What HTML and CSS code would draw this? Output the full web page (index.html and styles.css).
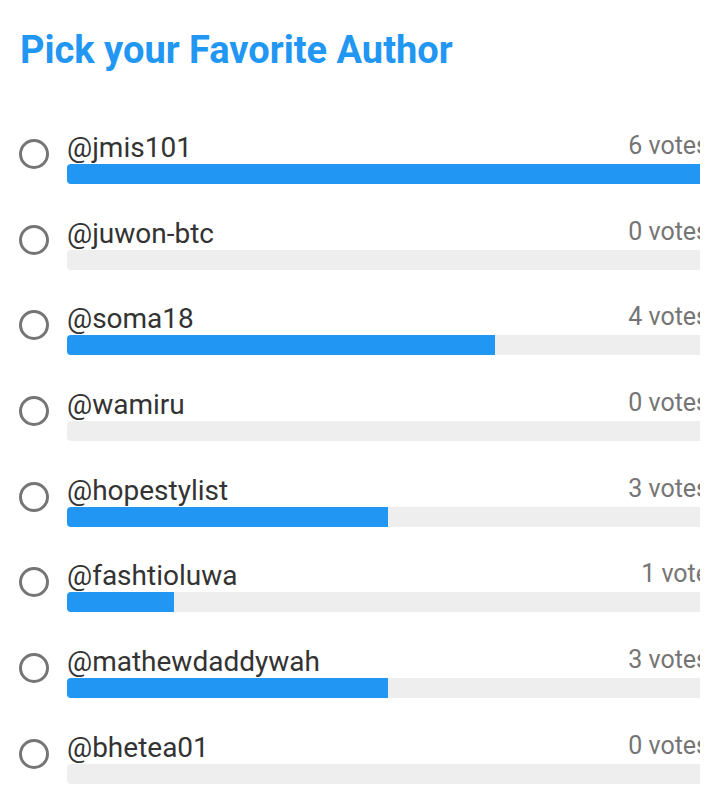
FILE: index.html
```
<!DOCTYPE html>
<html>
<head>
<meta charset="utf-8">
<link rel="stylesheet" href="styles.css">
</head>
<body>
<div class="page">
  <h1 class="title">Pick your Favorite Author</h1>
  <div class="list">
    <div class="row"><span class="radio"></span><div class="content"><div class="top"><span class="name">@jmis101</span><span class="votes">6 votes</span></div><div class="bar"><div class="fill" style="width:100%"></div></div></div></div>
    <div class="row"><span class="radio"></span><div class="content"><div class="top"><span class="name">@juwon-btc</span><span class="votes">0 votes</span></div><div class="bar"><div class="fill" style="width:0%"></div></div></div></div>
    <div class="row"><span class="radio"></span><div class="content"><div class="top"><span class="name">@soma18</span><span class="votes">4 votes</span></div><div class="bar"><div class="fill" style="width:66.667%"></div></div></div></div>
    <div class="row"><span class="radio"></span><div class="content"><div class="top"><span class="name">@wamiru</span><span class="votes">0 votes</span></div><div class="bar"><div class="fill" style="width:0%"></div></div></div></div>
    <div class="row"><span class="radio"></span><div class="content"><div class="top"><span class="name">@hopestylist</span><span class="votes">3 votes</span></div><div class="bar"><div class="fill" style="width:50%"></div></div></div></div>
    <div class="row"><span class="radio"></span><div class="content"><div class="top"><span class="name">@fashtioluwa</span><span class="votes">1 vote</span></div><div class="bar"><div class="fill" style="width:16.667%"></div></div></div></div>
    <div class="row"><span class="radio"></span><div class="content"><div class="top"><span class="name">@mathewdaddywah</span><span class="votes">3 votes</span></div><div class="bar"><div class="fill" style="width:50%"></div></div></div></div>
    <div class="row"><span class="radio"></span><div class="content"><div class="top"><span class="name">@bhetea01</span><span class="votes">0 votes</span></div><div class="bar"><div class="fill" style="width:0%"></div></div></div></div>
  </div>
</div>
</body>
</html>
```
FILE: styles.css
```
html, body {
  margin: 0;
  padding: 0;
  background: #ffffff;
}
body {
  font-family: Roboto, "Liberation Sans", sans-serif;
  height: 785px;
  overflow: hidden;
}
.page {
  width: 700px;
  overflow: hidden;
  padding-top: 28px;
}
.title {
  margin: 0 0 0 20px;
  font-size: 38px;
  line-height: 44px;
  font-weight: 700;
  color: #2196f3;
  white-space: nowrap;
}
.list {
  margin-top: 60px;
  display: flex;
  flex-direction: column;
  gap: 33.7px;
}
.row {
  display: flex;
  align-items: flex-start;
  padding-left: 19px;
}
.radio {
  flex: none;
  width: 30px;
  height: 30px;
  box-sizing: border-box;
  border: 3.5px solid #757575;
  border-radius: 50%;
  margin-top: 7px;
  margin-right: 18px;
}
.content {
  flex: none;
  width: 642px;
}
.top {
  display: flex;
  justify-content: space-between;
  align-items: flex-start;
  height: 32px;
}
.name {
  font-size: 28px;
  line-height: 32px;
  color: #333333;
  white-space: nowrap;
}
.votes {
  font-size: 25px;
  line-height: 28px;
  color: #757575;
  white-space: nowrap;
}
.bar {
  height: 20px;
  background: #eeeeee;
  border-radius: 4px;
  overflow: hidden;
}
.fill {
  height: 100%;
  background: #2196f3;
}
```
